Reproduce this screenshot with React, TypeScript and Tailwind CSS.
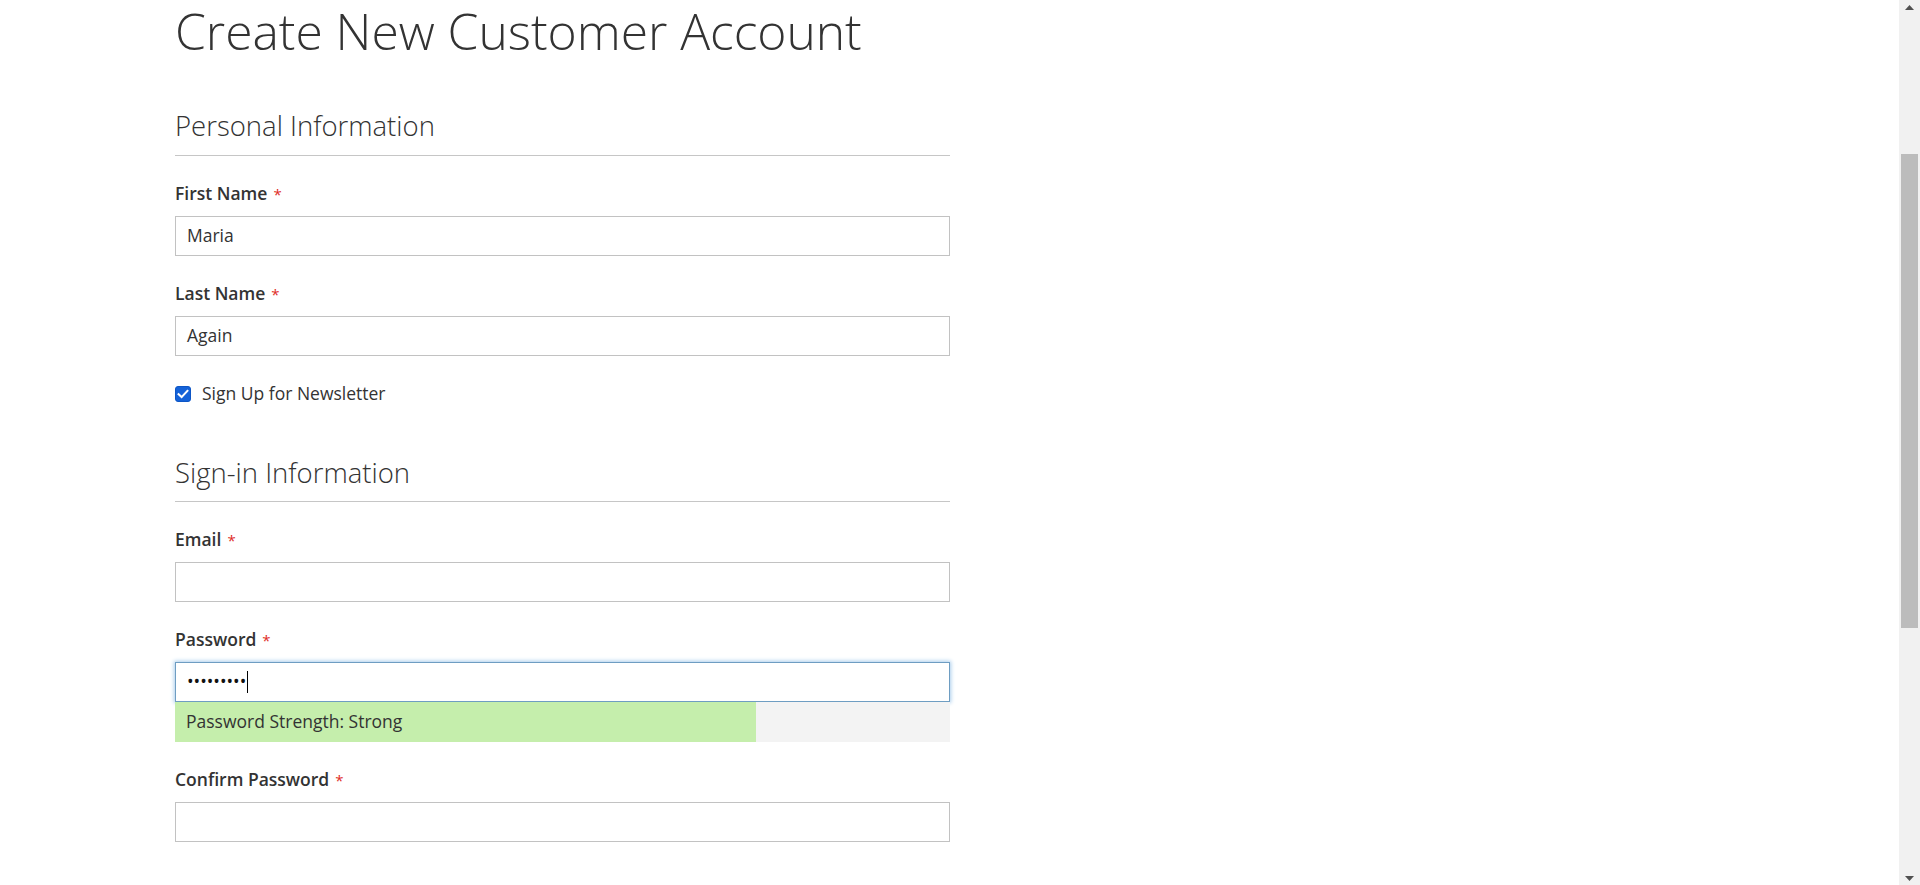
import React from "react";

const font = { fontFamily: '"Open Sans", "Noto Sans", sans-serif' };

function Label({ text, className = "" }: { text: string; className?: string }) {
  return (
    <div className={`mt-[27px] flex h-[21px] items-baseline text-[17.5px] leading-[21px] font-semibold text-[#333333] ${className}`}>
      <span>{text}</span>
      <span className="ml-[6px] text-[15px] font-normal text-[#e02b27]">*</span>
    </div>
  );
}

function Field({ value }: { value?: string }) {
  return (
    <div className="mt-[12px] flex h-[40px] w-full items-center border border-[#c2c2c2] bg-white px-[11px] pb-[1px] text-[17.5px] leading-[21px] text-[#333333]">
      {value}
    </div>
  );
}

function Legend({ text, className = "", pb }: { text: string; className?: string; pb: string }) {
  return (
    <div className={`border-b border-[#c6c6c6] ${pb} ${className}`}>
      <div className="text-[27.5px] leading-[33px] font-light text-[#333333]">{text}</div>
    </div>
  );
}

export default function App() {
  return (
    <div className="flex h-[885px] w-full overflow-hidden bg-white" style={font}>
      <div className="flex-1">
        <div className="ml-[175px] w-[775px]">
          <h1 className="pt-[4px] text-[49.8px] leading-[54px] font-light tracking-[-0.05px] text-[#333333] whitespace-nowrap">
            Create New Customer Account
          </h1>

          <Legend text="Personal Information" className="mt-[51px]" pb="pb-[13px]" />

          <Label text="First Name" />
          <Field value="Maria" />

          <Label text="Last Name" />
          <Field value="Again" />

          <div className="mt-[27px] flex h-[21px] items-center">
            <svg width="16" height="16" viewBox="0 0 16 16" className="shrink-0">
              <rect x="0.5" y="0.5" width="15" height="15" rx="2.5" fill="#1462d8" stroke="#0d56c6" />
              <path d="M3.6 8.2 L6.6 11.1 L12.4 4.9" fill="none" stroke="#ffffff" strokeWidth="2.1" strokeLinecap="square" />
            </svg>
            <span className="ml-[11px] text-[17.5px] leading-[21px] text-[#333333]">Sign Up for Newsletter</span>
          </div>

          <Legend text="Sign-in Information" className="mt-[52px]" pb="pb-[12px]" />

          <Label text="Email" />
          <Field />

          <Label text="Password" />
          <div className="mt-[12px] flex h-[40px] w-full items-center border border-[#6e9dc2] bg-white px-[11px] pb-[1px] text-[17.5px] leading-[21px] text-[#111111] shadow-[0_0_4px_1px_#a9cdec]">
            <span>•••••••••</span>
            <span className="ml-[1px] inline-block h-[22px] w-[1px] bg-black" />
          </div>
          <div className="relative h-[40px] w-full bg-[#f3f3f3]">
            <div className="h-full w-3/4 bg-[#c5eeac]" />
            <div className="absolute inset-0 flex items-center px-[11px] pb-[1px] text-[17.5px] leading-[21px] text-[#333333]">
              Password Strength: Strong
            </div>
          </div>

          <Label text="Confirm Password" />
          <Field />
        </div>
      </div>

      <div className="flex h-full w-[21px] shrink-0 flex-col bg-[#f1f1f1]">
        <div className="flex h-[14px] items-center justify-center">
          <svg width="9" height="5" viewBox="0 0 9 5">
            <path d="M0 5 L4.5 0 L9 5 Z" fill="#505050" />
          </svg>
        </div>
        <div className="ml-[2px] mt-[140px] h-[474px] w-[17px] bg-[#bcbcbc]" />
        <div className="flex-1" />
        <div className="flex h-[14px] items-center justify-center">
          <svg width="9" height="5" viewBox="0 0 9 5">
            <path d="M0 0 L4.5 5 L9 0 Z" fill="#505050" />
          </svg>
        </div>
      </div>
    </div>
  );
}
